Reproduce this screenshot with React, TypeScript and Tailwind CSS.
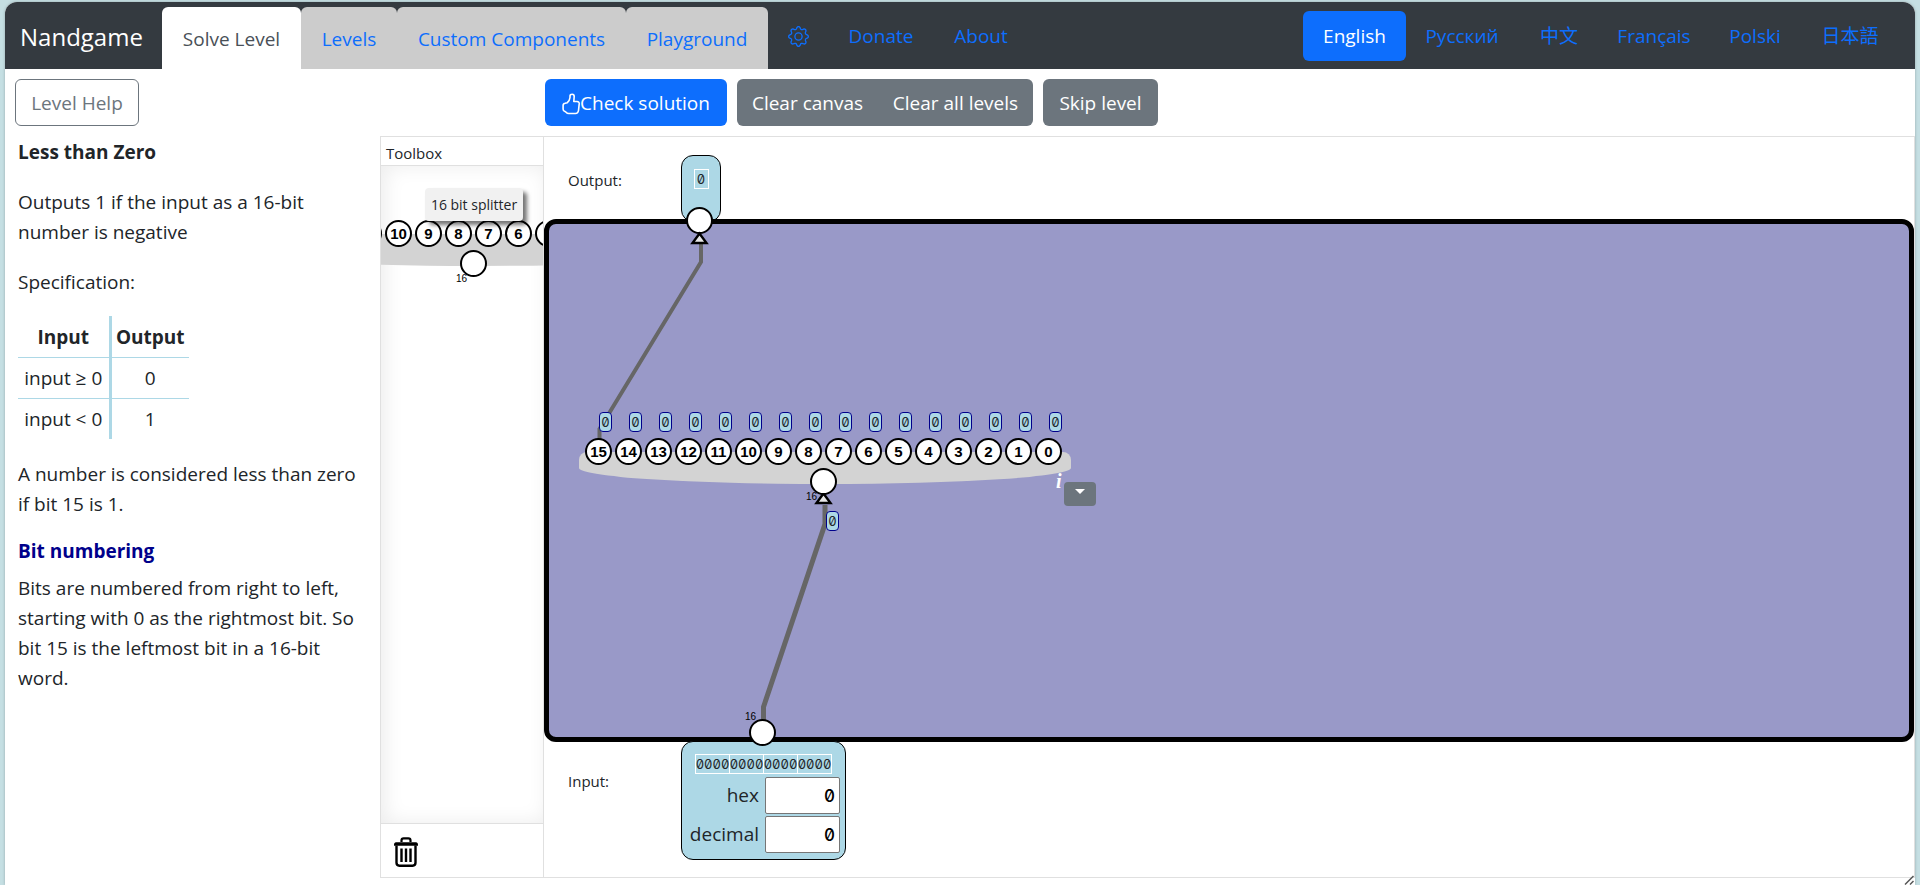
import type { ReactNode } from "react";
import { BsGear } from "react-icons/bs";

const BITS = [15, 14, 13, 12, 11, 10, 9, 8, 7, 6, 5, 4, 3, 2, 1, 0];

const TABS = [
  { label: "Solve Level", width: "w-[139px]", active: true },
  { label: "Levels", width: "w-24", active: false },
  { label: "Custom Components", width: "w-[229px]", active: false },
  { label: "Playground", width: "w-[142px]", active: false },
];

const LANGUAGES = [
  { label: "Русский", width: "w-[112px]" },
  { label: "中文", width: "w-[82px]" },
  { label: "Français", width: "w-[108px]" },
  { label: "Polski", width: "w-[94px]" },
  { label: "日本語", width: "w-[96px]" },
];

function ThumbIcon() {
  return (
    <svg viewBox="0 0 18 22" className="h-[22px] w-[18px]" fill="none" stroke="currentColor" strokeWidth="1.6" strokeLinejoin="round" aria-hidden="true">
      <path d="M10.2 1.2c1.5 0 2 1 2 2.300l-.4 5H15c1.700 0 2.300 1 2.200 2.400l-.7 6.600c-.3 2-1.200 3-3 3H6.800c-1.300 0-2-.4-2.800-1.300l-2-1.400c-.6-.5-.9-1-.9-1.900v-3.400c0-1.300.7-2 2-2.200l2.200-.6C7 8.200 7.800 6.500 8 4.500V2.900c.1-1.100.9-1.700 2.200-1.700z" />
    </svg>
  );
}

function TrashIcon() {
  return (
    <svg viewBox="0 0 26 30" className="h-[30px] w-[26px]" fill="none" stroke="#000" aria-hidden="true">
      <path d="M8.500 5V3.500C8.500 2.200 9.300 1.300 10.600 1.300h4.800c1.300 0 2.100.9 2.100 2.200V5" strokeWidth="2.200" />
      <path d="M3 5.200h20c1.200 0 2 1 2 2.300v1.300H1V7.500c0-1.300.8-2.300 2-2.300z" fill="#000" stroke="none" />
      <path d="M3.500 8.500v17.300c0 1.900 1 2.900 2.900 2.900h13.200c1.900 0 2.900-1 2.900-2.900V8.500" strokeWidth="2.400" />
      <path d="M8.500 11.500v13.500M13 11.500v13.500M17.500 11.500v13.500" strokeWidth="2.400" />
    </svg>
  );
}

function Pin({ children }: { children?: ReactNode }) {
  return (
    <span className="flex size-[27px] shrink-0 items-center justify-center rounded-full border-2 border-black bg-white font-['Liberation_Sans',sans-serif] text-[15px] font-bold leading-none text-black">
      {children}
    </span>
  );
}

function Digit() {
  return (
    <span className="flex h-5 w-[13px] items-center justify-center rounded-sm border border-[#00008b] bg-[#add8e6] font-['Inter',monospace] text-[13px] leading-none slashed-zero tabular-nums text-[#212529]">
      0
    </span>
  );
}

function BusWidth() {
  return <span className="font-['Liberation_Sans',sans-serif] text-[10px] leading-none text-black">16</span>;
}

function Splitter({ from = 15, to = 0 }: { from?: number; to?: number }) {
  return (
    <div className="relative w-[492px]">
      <div className="relative z-10 flex gap-[3px] pl-1.5">
        {BITS.map((bit) => (
          <Pin key={bit}>{bit <= from && bit >= to ? bit : null}</Pin>
        ))}
      </div>
      <div className="-mt-[13px] h-8 rounded-t-lg rounded-b-[50%_16px] bg-[#d3d3d3]" />
      <div className="absolute top-[30px] left-[231px] z-10">
        <Pin />
      </div>
      <div className="absolute top-[54px] left-[227px] flex">
        <BusWidth />
      </div>
    </div>
  );
}

function NumberField({ id, label }: { id: string; label: string }) {
  return (
    <div className="flex items-center justify-end gap-1.5">
      <label htmlFor={id} className="text-[19px]">{label}</label>
      <input
        id={id}
        defaultValue="0"
        className="h-[37px] w-[75px] rounded-xs border border-[#767676] bg-white px-1 text-right font-['Inter',monospace] text-[17px] font-medium slashed-zero tabular-nums text-black"
      />
    </div>
  );
}

function Header() {
  return (
    <header className="flex h-[67px] justify-between rounded-t-xl bg-[#343a40] text-[19px] text-[#0d6efd]">
      <nav className="flex">
        <a href="#home" className="flex w-[157px] items-center pt-0.5 pl-[15px] text-2xl text-white">
          Nandgame
        </a>
        <div className="flex items-end">
          {TABS.map((tab) => (
            <a
              key={tab.label}
              href="#tab"
              className={`flex h-[62px] items-center justify-center rounded-t-md pt-0.5 ${tab.width} ${tab.active ? "bg-white text-[#495057]" : "bg-[#ccc]"}`}
            >
              {tab.label}
            </a>
          ))}
        </div>
        <div className="flex items-center pt-0.5">
          <button type="button" aria-label="Settings" className="flex w-[61px] justify-center">
            <BsGear className="size-[21px]" />
          </button>
          <a href="#donate" className="w-[104px] text-center">Donate</a>
          <a href="#about" className="w-24 text-center">About</a>
        </div>
      </nav>
      <nav className="mr-[17px] flex items-center pt-0.5" aria-label="Languages">
        <a href="#lang" className="mb-0.5 flex h-[50px] w-[103px] items-center justify-center rounded-md bg-[#0d6efd] pt-0.5 text-white">
          English
        </a>
        {LANGUAGES.map((lang) => (
          <a key={lang.label} href="#lang" className={`text-center ${lang.width}`}>{lang.label}</a>
        ))}
      </nav>
    </header>
  );
}

function Toolbar() {
  return (
    <div className="flex h-[67px] items-center text-[19px] text-white">
      <div className="w-[540px] pl-2.5">
        <button type="button" className="h-[47px] w-[124px] rounded-md border border-[#6c757d] pt-0.5 text-[#6c757d]">
          Level Help
        </button>
      </div>
      <div className="flex gap-2.5">
        <button type="button" className="flex h-[47px] w-[182px] items-center justify-center rounded-md bg-[#0d6efd] pt-0.5">
          <ThumbIcon />
          Check solution
        </button>
        <div className="flex overflow-hidden rounded-md">
          <button type="button" className="h-[47px] w-[141px] bg-[#6c757d] pt-0.5">Clear canvas</button>
          <button type="button" className="h-[47px] w-[155px] bg-[#6c757d] pt-0.5">Clear all levels</button>
        </div>
        <button type="button" className="h-[47px] w-[115px] rounded-md bg-[#6c757d] pt-0.5">Skip level</button>
      </div>
    </div>
  );
}

function Help() {
  return (
    <section className="w-[375px] shrink-0 pt-px pr-4 pl-[13px] text-[19px] leading-[30px]">
      <h1 className="font-bold">Less than Zero</h1>
      <p className="mt-5">Outputs 1 if the input as a 16-bit number is negative</p>
      <p className="mt-5">Specification:</p>
      <table className="mt-[19px] border-collapse text-center">
        <thead>
          <tr className="h-[41px] border-b border-[#add8e6]">
            <th className="w-[92px] border-r-3 border-[#add8e6] p-0 pt-0.5">Input</th>
            <th className="w-[79px] p-0 pt-0.5">Output</th>
          </tr>
        </thead>
        <tbody>
          <tr className="h-[41px] border-b border-[#add8e6]">
            <td className="border-r-3 border-[#add8e6] p-0">input ≥ 0</td>
            <td className="p-0">0</td>
          </tr>
          <tr className="h-[41px]">
            <td className="border-r-3 border-[#add8e6] p-0">input &lt; 0</td>
            <td className="p-0">1</td>
          </tr>
        </tbody>
      </table>
      <p className="mt-5">A number is considered less than zero if bit 15 is 1.</p>
      <h2 className="mt-[17px] font-bold text-[#00008b]">Bit numbering</h2>
      <p className="mt-[7px]">
        Bits are numbered from right to left, starting with 0 as the rightmost bit. So bit 15 is the leftmost bit in a
        16-bit word.
      </p>
    </section>
  );
}

function Toolbox() {
  return (
    <section className="flex w-[164px] shrink-0 flex-col border border-[#e0e0e0]">
      <h2 className="flex h-7 items-center pt-1 pl-[5px] text-[15px]">Toolbox</h2>
      <div className="relative flex-1 overflow-hidden border-y border-[#e0e0e0] shadow-[inset_4px_0_20px_rgba(0,0,0,0.08)]">
        <div className="absolute top-[54px] left-[-152px]">
          <Splitter from={10} to={6} />
        </div>
        <div className="absolute top-[22px] left-11 z-20 flex h-[33px] w-[98px] items-center justify-center rounded-sm bg-[#f1f1f1] text-sm whitespace-nowrap shadow-[4px_4px_4px_rgba(0,0,0,0.55)]">
          16 bit splitter
        </div>
      </div>
      <div className="flex h-[53px] items-center pt-0.5 pl-3">
        <button type="button" aria-label="Delete component">
          <TrashIcon />
        </button>
      </div>
    </section>
  );
}

function Circuit() {
  return (
    <section className="relative flex flex-1 flex-col border-y border-r border-[#e0e0e0]">
      <div className="flex h-[82px] items-start pt-[18px] pl-6">
        <span className="w-[113px] pt-3.5 text-[15px]">Output:</span>
        <div className="flex h-[67px] w-10 justify-center rounded-xl border border-black bg-[#add8e6] pt-[13px]">
          <span className="flex h-5 w-[15px] items-center justify-center border border-white font-['Inter',monospace] text-[13px] leading-none slashed-zero tabular-nums">
            0
          </span>
        </div>
      </div>
      <div className="h-[523px] rounded-xl border-5 border-black bg-[#9999c8]" />
      <div className="flex items-start pl-6">
        <span className="w-[113px] pt-7 text-[15px]">Input:</span>
        <div className="-mt-px flex h-[119px] w-[165px] flex-col gap-0.5 rounded-xl border border-black bg-[#add8e6] pt-3 pr-[5px]">
          <div className="mb-px ml-[13px] flex h-5 w-[137px] divide-x divide-white border border-white font-['Inter',monospace] text-[13px] leading-[18px] slashed-zero tabular-nums">
            {[0, 1, 2, 3].map((group) => (
              <span key={group} className="flex min-w-0 flex-1 justify-center">0000</span>
            ))}
          </div>
          <NumberField id="hex" label="hex" />
          <NumberField id="decimal" label="decimal" />
        </div>
      </div>

      <svg className="pointer-events-none absolute top-0 left-0 h-[620px] w-[540px]" fill="none" stroke="#666" aria-hidden="true">
        <path d="M157 106V125L55.500 292V305" strokeWidth="4" />
        <path d="M281 368V387L219.500 570V585" strokeWidth="5" />
      </svg>

      <div className="absolute top-[301px] left-[35px]">
        <Splitter />
      </div>
      <div className="absolute top-[275px] left-[55px] flex gap-[17px]">
        {BITS.map((bit) => (
          <Digit key={bit} />
        ))}
      </div>
      <div className="absolute top-[374px] left-[282px]">
        <Digit />
      </div>
      <div className="absolute top-[70px] left-[142px]">
        <Pin />
      </div>
      <div className="absolute top-[582px] left-[205px]">
        <Pin />
      </div>
      <div className="absolute top-[575px] left-[201px] flex">
        <BusWidth />
      </div>

      <svg className="pointer-events-none absolute top-0 left-0 h-[620px] w-[540px]" fill="#e8e8e8" stroke="#000" strokeWidth="2.400" aria-hidden="true">
        <path d="M155.500 96.500l-7 9.500h14z" />
        <path d="M279.500 356.500l-7 9.500h14z" />
      </svg>

      <div className="absolute top-[332px] left-[512px] flex items-start gap-0.5">
        <button type="button" aria-label="Info" className="font-['Liberation_Serif',serif] text-xl font-bold italic leading-6 text-white">
          i
        </button>
        <button type="button" aria-label="Component menu" className="mt-[13px] flex h-6 w-8 items-start justify-center rounded-sm bg-[#6c757d] pt-[7px]">
          <svg viewBox="0 0 10 5" className="h-[5px] w-2.5" fill="#fff" aria-hidden="true">
            <path d="M0 0h10L5 5z" />
          </svg>
        </button>
      </div>
    </section>
  );
}

export default function App() {
  return (
    <div className="min-h-screen bg-[#c5dfe3] px-[5px] pt-0.5 font-['Open_Sans','Noto_Sans_CJK_SC',sans-serif] text-[#212529]">
      <div className="relative flex min-h-[883px] flex-col rounded-t-xl bg-white shadow-[0_0_3px_rgba(0,0,0,0.25)]">
        <Header />
        <Toolbar />
        <main className="flex h-[742px]">
          <Help />
          <Toolbox />
          <Circuit />
        </main>
        <svg viewBox="0 0 10 10" className="absolute right-px bottom-0 size-2.5" stroke="#555" strokeWidth="1.500" aria-hidden="true">
          <path d="M1 9.500L9.500 1M6 9.500L9.500 6" />
        </svg>
      </div>
    </div>
  );
}
